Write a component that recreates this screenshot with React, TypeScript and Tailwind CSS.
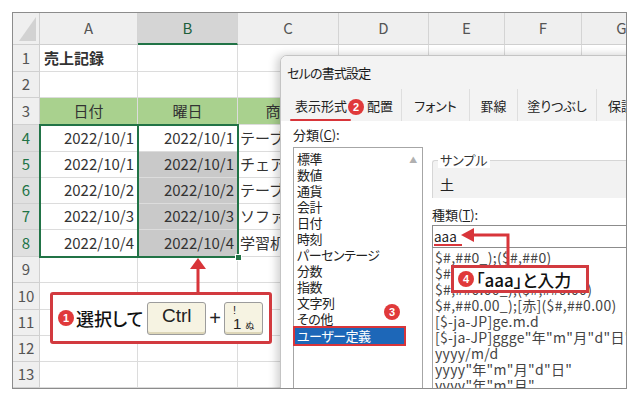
import React from 'react';

const LETTERS = ['A', 'B', 'C', 'D', 'E', 'F', 'G'];
const dates = ['2022/10/1', '2022/10/1', '2022/10/2', '2022/10/3', '2022/10/4'];
const goods = ['テーブル', 'チェア', 'テーブル', 'ソファ', '学習机'];

const categories = [
  '標準',
  '数値',
  '通貨',
  '会計',
  '日付',
  '時刻',
  'パーセンテージ',
  '分数',
  '指数',
  '文字列',
  'その他',
  'ユーザー定義',
];

const formats = [
  '$#,##0_);($#,##0)',
  '$#,##0_);[赤]($#,##0)',
  '$#,##0.00_);($#,##0.00)',
  '$#,##0.00_);[赤]($#,##0.00)',
  '[$-ja-JP]ge.m.d',
  '[$-ja-JP]ggge"年"m"月"d"日"',
  'yyyy/m/d',
  'yyyy"年"m"月"d"日"',
  'yyyy"年"m"月"',
];

function Badge({ n }: { n: string }) {
  return (
    <span className="flex h-[16px] w-[16px] shrink-0 items-center justify-center rounded-full bg-[#e0393a] text-[11px] font-bold leading-none text-white font-['Liberation_Sans',sans-serif]">
      {n}
    </span>
  );
}

function cellFor(row: number, col: number) {
  const base =
    'flex items-center overflow-hidden whitespace-nowrap border-r border-b border-[#dcdcdc] text-[15px] text-[#333]';
  if (row === 1 && col === 0) {
    return <div className={`${base} bg-white pl-[4px] font-bold text-[#111]`}>売上記録</div>;
  }
  if (row === 3 && col < 3) {
    const t = ['日付', '曜日', '商品名'][col];
    return <div className={`${base} justify-center bg-[#a9d18e] border-[#8fb877]`}>{t}</div>;
  }
  if (row >= 4 && row <= 8 && col < 3) {
    const i = row - 4;
    if (col === 2) return <div className={`${base} bg-white pl-[2px]`}>{goods[i]}</div>;
    const sel = col === 1 && row > 4;
    return (
      <div className={`${base} justify-end pr-[3px] ${sel ? 'bg-[#c9c9c9]' : 'bg-white'}`}>
        {dates[i]}
      </div>
    );
  }
  return <div className={`${base} bg-white`} />;
}

function Sheet() {
  const rows = Array.from({ length: 13 }, (_, i) => i + 1);
  return (
    <div className="grid grid-cols-[27px_98px_100px_101px_90px_76px_77px_80px] grid-rows-[32px_27px_26px_27px_27px_26px_26px_26px_27px_26px_27px_26px_26px_26px]">
      <div className="flex items-end justify-end border-r border-b border-[#cfcfcf] bg-[#efefef] pb-[3px] pr-[3px]">
        <svg width="17" height="24" viewBox="0 0 17 24">
          <polygon points="17,0 17,24 0,24" fill="#d2d2d2" />
        </svg>
      </div>
      {LETTERS.map((l) => (
        <div
          key={l}
          className={`flex items-center justify-center border-r border-[#d4d4d4] text-[15px] ${
            l === 'B'
              ? 'border-b-2 border-b-[#217346] bg-[#d5d5d5] text-[#1d5f3a]'
              : 'border-b border-b-[#cfcfcf] bg-[#efefef] text-[#555]'
          }`}
        >
          {l}
        </div>
      ))}
      {rows.map((r) => (
        <React.Fragment key={r}>
          <div
            className={`flex items-center justify-center border-r border-b border-[#d0d0d0] text-[15px] ${
              r >= 4 && r <= 8 ? 'bg-[#e0e0e0] text-[#217346]' : 'bg-[#efefef] text-[#555]'
            }`}
          >
            {r}
          </div>
          {LETTERS.map((_, c) => (
            <React.Fragment key={c}>{cellFor(r, c)}</React.Fragment>
          ))}
        </React.Fragment>
      ))}
    </div>
  );
}

function Dialog() {
  return (
    <div className="absolute left-[267px] top-[42px] h-[400px] w-[400px] overflow-hidden rounded-tl-[7px] border border-[#c4c4c4] bg-white shadow-[-3px_0_10px_rgba(0,0,0,0.2)] [font-feature-settings:'palt']">
      <div className="flex h-[33px] items-center bg-[#f3f3f3] pl-[6px] pt-[1px] text-[13px] tracking-[-0.8px] text-[#1a1a1a]">
        セルの書式設定
      </div>
      <div className="relative flex h-[32px] bg-[#f3f3f3] text-[13px] text-[#222]">
        <div className="flex w-[71px] items-center pl-[14px] pt-[2px]">表示形式</div>
        <div className="flex w-[50px] items-center border-r border-[#dedede] pl-[15px] pt-[2px]">配置</div>
        <div className="flex w-[68px] items-center justify-center border-r border-[#dedede] pt-[2px]">フォント</div>
        <div className="flex w-[48px] items-center justify-center border-r border-[#dedede] pt-[2px]">罫線</div>
        <div className="flex w-[79px] items-center justify-center border-r border-[#dedede] pt-[2px]">塗りつぶし</div>
        <div className="flex w-[60px] items-center pl-[11px] pt-[2px]">保護</div>
        <span className="absolute bottom-0 left-[9px] h-[2px] w-[61px] rounded-full bg-[#d8353a]" />
        <span className="absolute left-[67px] top-[10px]">
          <Badge n="2" />
        </span>
      </div>
      <div className="flex h-[330px] bg-white">
        <div className="ml-[12px] w-[130px]">
          <div className="pt-[6px] text-[13px] leading-[16px] text-[#222]">
            分類(<span className="underline">C</span>):
          </div>
          <div className="mt-[4px] flex h-[300px] border border-[#a6a6a6] text-[13px] leading-[16px] tracking-[-0.5px] text-[#222]">
            <div className="w-[110px] pt-[3px]">
              {categories.map((c) =>
                c === 'ユーザー定義' ? (
                  <div
                    key={c}
                    className="ml-[1px] mt-[1px] bg-[#1d67b8] pl-[2px] text-white outline-2 outline-[#d8353a]"
                  >
                    {c}
                  </div>
                ) : (
                  <div key={c} className="pl-[3px]">
                    {c}
                  </div>
                )
              )}
            </div>
            <div className="w-[18px] pt-[4px] text-center text-[8px] text-[#b0b0b0]">▲</div>
          </div>
        </div>
        <div className="ml-[9px] flex-1">
          <div className="relative mt-[39px] h-[38px] rounded-tl-[3px] border-l border-t border-[#d6d6d6] bg-[#f2f2f2]">
            <span className="absolute -top-[9px] left-[5px] bg-white px-[2px] text-[13px] leading-[16px] text-[#333]">
              サンプル
            </span>
            <div className="pl-[7px] pt-[14px] text-[14px] leading-[18px] text-[#222]">土</div>
          </div>
          <div className="mt-[9px] text-[13px] leading-[16px] text-[#222]">
            種類(<span className="underline">T</span>):
          </div>
          <div className="mt-[2px] flex h-[23px] items-center border border-[#8c8c8c] pl-[1px] text-[13.5px] text-[#222]">
            <span className="border-b-2 border-[#d8353a] pr-[5px] leading-[16px]">aaa</span>
          </div>
          <div className="h-[200px] border border-t-0 border-[#a6a6a6] pl-[2px] pt-[1px] text-[14px] leading-[16px] tracking-[0.3px] text-[#444]">
            {formats.map((f) => (
              <div key={f} className="whitespace-nowrap">
                {f}
              </div>
            ))}
          </div>
        </div>
      </div>
    </div>
  );
}

export default function App() {
  return (
    <div className="relative h-[398px] w-[638px] overflow-hidden bg-white pl-[12px] pt-[12px] font-['Noto_Sans_CJK_JP',sans-serif]">
      <div className="relative h-[377px] w-[615px] overflow-hidden border border-[#8c8c8c] bg-white">
        <Sheet />
        {/* selection A4:A8 and B4:B8 */}
        <div className="absolute left-[26px] top-[111px] h-[134px] w-[100px] border-2 border-[#217346]" />
        <div className="absolute left-[124px] top-[111px] h-[134px] w-[102px] border-2 border-[#217346]" />
        <div className="absolute left-[222px] top-[241px] h-[7px] w-[7px] border border-white bg-[#217346]" />
        <Dialog />
      </div>

      {/* callout 1 */}
      <svg className="absolute left-[189px] top-[257px]" width="18" height="38" viewBox="0 0 18 38">
        <polygon points="9,1 1,12 17,12" fill="#d8353a" />
        <rect x="7.5" y="11" width="3" height="27" fill="#d8353a" />
      </svg>
      <div className="absolute left-[50px] top-[292px] flex h-[52px] w-[222px] items-center rounded-[3px] border-[3px] border-[#d23a3f] bg-white pl-[5px] [font-feature-settings:'palt']">
        <Badge n="1" />
        <span className="ml-[2px] text-[18px] font-medium text-[#111]">選択して</span>
        <div className="ml-[4px] flex h-[33px] w-[59px] items-center justify-center rounded-[3px] border border-[#9c9c9c] bg-[#f6f3e2] pb-[4px] text-[19px] text-[#222] shadow-[inset_0_-2px_0_#ddd6b8] font-['Liberation_Sans',sans-serif]">
          Ctrl
        </div>
        <span className="mx-[3px] text-[20px] text-[#222] font-['Liberation_Sans',sans-serif]">+</span>
        <div className="flex h-[33px] w-[39px] flex-col items-start rounded-[3px] border border-[#9c9c9c] bg-[#f6f3e2] pl-[8px] pt-[1px] shadow-[inset_0_-2px_0_#ddd6b8]">
          <span className="text-[11px] leading-[12px] text-[#222] font-['Liberation_Sans',sans-serif]">!</span>
          <div className="flex items-end gap-[4px]">
            <span className="text-[15px] leading-[15px] text-[#222] font-['Liberation_Sans',sans-serif]">1</span>
            <span className="text-[9px] leading-[11px] text-[#222]">ぬ</span>
          </div>
        </div>
      </div>

      {/* badge 3 */}
      <span className="absolute left-[384px] top-[304px]">
        <Badge n="3" />
      </span>

      {/* callout 4 */}
      <svg className="absolute left-[458px] top-[225px]" width="54" height="44" viewBox="0 0 54 44">
        <polyline points="50,43 50,10 15,10" fill="none" stroke="#d8353a" strokeWidth="3" />
        <polygon points="3,10 16,3 16,17" fill="#d8353a" />
      </svg>
      <div className="absolute left-[451px] top-[265px] flex h-[28px] w-[138px] items-center border-[3px] border-[#d23a3f] bg-white pl-[4px] [font-feature-settings:'palt']">
        <Badge n="4" />
        <span className="ml-[2px] text-[17px] font-medium leading-none text-[#111]">「aaa」と入力</span>
      </div>
    </div>
  );
}
